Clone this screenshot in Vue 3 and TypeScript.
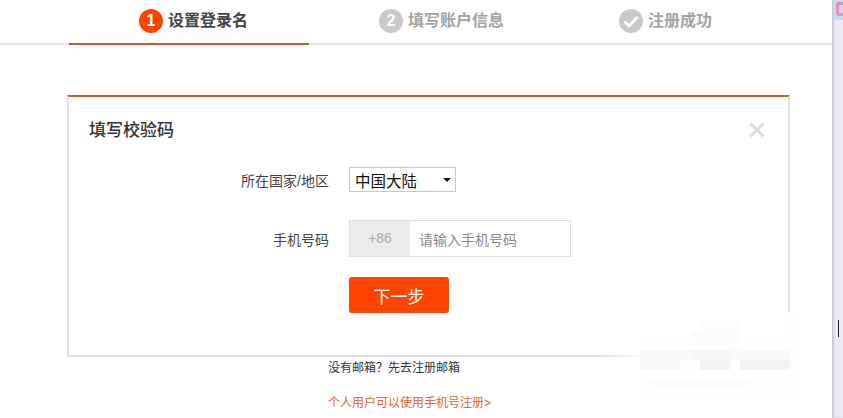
<script setup lang="ts">
interface Step { label: string; mark: string; active: boolean }
const steps: Step[] = [
  { label: '设置登录名', mark: '1', active: true },
  { label: '填写账户信息', mark: '2', active: false },
  { label: '注册成功', mark: 'check', active: false },
]
const mosaic: [number, number, number, number, string][] = [
  [640, 335, 160, 65, '#fefefe'],
  [782, 312, 18, 30, '#fefefe'],
  [700, 320, 40, 20, '#fdfdfd'],
  [690, 330, 50, 10, '#fbfbfb'],
  [690, 340, 50, 10, '#fcfcfc'],
  [640, 350, 150, 10, '#f9f9f9'],
  [690, 350, 40, 10, '#f6f6f6'],
  [640, 360, 40, 10, '#f8f8f8'],
  [700, 360, 30, 10, '#f4f4f4'],
  [740, 360, 50, 10, '#f4f4f4'],
  [650, 380, 100, 10, '#fbfbfb'],
  [600, 354, 40, 3, 'linear-gradient(90deg, rgba(253,253,253,0), #f9f9f9)'],
]
function cell(c: [number, number, number, number, string]) {
  return { left: c[0] + 'px', top: c[1] + 'px', width: c[2] + 'px', height: c[3] + 'px', background: c[4] }
}
</script>

<template>
  <div class="page">
    <main class="main">
      <nav class="steps">
        <div v-for="s in steps" :key="s.label" class="step" :class="{ active: s.active }">
          <span class="mark">
            <svg v-if="s.mark === 'check'" width="16" height="13" viewBox="0 0 16 13">
              <path d="M1.5 6.5 6 11 14.5 2" fill="none" stroke="#fff" stroke-width="2.8" />
            </svg>
            <template v-else>{{ s.mark }}</template>
          </span>
          <span class="label">{{ s.label }}</span>
        </div>
      </nav>

      <section class="card">
        <h2 class="title">填写校验码</h2>
        <svg class="close" width="16" height="16" viewBox="0 0 16 16">
          <path d="M1.5 1.5 14.5 14.5M14.5 1.5 1.5 14.5" stroke="#dcdcdc" stroke-width="3" />
        </svg>
        <div class="row first">
          <span class="field-label">所在国家/地区</span>
          <div class="select">
            <span>中国大陆</span>
            <i class="caret"></i>
          </div>
        </div>
        <div class="row second">
          <span class="field-label">手机号码</span>
          <div class="phone">
            <span class="code">+86</span>
            <span class="placeholder">请输入手机号码</span>
          </div>
        </div>
        <button class="next" type="button">下一步</button>
      </section>

      <p class="link">没有邮箱？先去注册邮箱</p>
      <p class="link orange">个人用户可以使用手机号注册&gt;</p>
    </main>
    <aside class="side">
      <span class="favicon"></span>
      <i class="tick"></i>
    </aside>
    <div v-for="(c, i) in mosaic" :key="i" class="blur" :style="cell(c)"></div>
  </div>
</template>

<style scoped>
.page {
  display: flex;
  width: 843px;
  height: 418px;
  overflow: hidden;
  background: #fff;
  font-family: "Liberation Sans", "Noto Sans CJK SC", sans-serif;
  color: #333;
}
.main {
  width: 832px;
  flex: none;
}
.steps {
  display: flex;
  height: 43px;
  padding-left: 69px;
  border-bottom: 2px solid #e6e6e6;
}
.step {
  width: 240px;
  height: 45px;
  display: flex;
  gap: 5px;
  padding: 9px 0 0 70px;
  box-sizing: border-box;
  font-size: 16px;
  font-weight: 700;
  color: #a3a3a3;
}
.step.active {
  color: #444;
  border-bottom: 2px solid #d4582a;
}
.mark {
  width: 24px;
  height: 24px;
  border-radius: 50%;
  background: #c9c9c9;
  color: #fff;
  font-size: 16px;
  line-height: 24px;
  display: flex;
  align-items: center;
  justify-content: center;
}
.active .mark { background: #ff4400; }
.label { line-height: 23px; }
.card {
  position: relative;
  margin: 50px 0 0 67px;
  width: 723px;
  height: 262px;
  box-sizing: border-box;
  border: 2px solid #e0e0e0;
  border-top: 2px solid #d4582a;
  padding: 23px 0 0 20px;
}
.title {
  margin: 0;
  font-size: 17px;
  line-height: 22px;
  font-weight: 500;
  color: #333;
}
.close {
  position: absolute;
  top: 25px;
  right: 23px;
}
.row {
  display: flex;
  align-items: center;
  margin-left: -20px;
}
.first { margin-top: 25px; }
.second { margin-top: 28px; }
.field-label {
  width: 260px;
  text-align: right;
  font-size: 14px;
  color: #444;
  margin-right: 20px;
}
.select {
  width: 107px;
  height: 25px;
  box-sizing: border-box;
  border: 1px solid #c8c8c8;
  display: flex;
  align-items: center;
  justify-content: space-between;
  padding: 0 4px 0 5px;
  font-size: 15.5px;
  color: #111;
}
.caret {
  width: 0;
  height: 0;
  border-left: 4px solid transparent;
  border-right: 4px solid transparent;
  border-top: 4px solid #111;
}
.phone {
  width: 222px;
  height: 37px;
  box-sizing: border-box;
  border: 1px solid #dedede;
  display: flex;
  align-items: center;
  font-size: 14px;
}
.code {
  width: 60px;
  height: 100%;
  background: #ececec;
  color: #a8a8a8;
  text-align: center;
  line-height: 35px;
}
.placeholder {
  margin-left: 9px;
  color: #8a8a8a;
}
.next {
  display: block;
  margin: 20px 0 0 260px;
  width: 100px;
  height: 36px;
  border: 0;
  border-radius: 3px;
  background: #ff4400;
  color: #fff;
  font: 17px "Liberation Sans", "Noto Sans CJK SC", sans-serif;
  padding: 0;
}
.link {
  margin: 3px 0 0 328px;
  font-size: 12px;
  line-height: 16px;
  color: #333;
}
.link.orange {
  margin-top: 19px;
  color: #e8622f;
}
.side {
  flex: 1;
  position: relative;
  background: #ecebf6;
  box-shadow: inset 2px 0 2px #c9c9d0;
}
.favicon {
  position: absolute;
  top: 0;
  left: 2px;
  width: 9px;
  height: 20px;
  background: #c5dcf0;
}
.favicon::after {
  content: "";
  position: absolute;
  left: 2px;
  top: 2px;
  width: 5px;
  height: 8px;
  border: 3px solid #e58fc0;
  border-radius: 3px;
}
.tick {
  position: absolute;
  left: 6px;
  top: 320px;
  width: 1px;
  height: 17px;
  background: #222;
}
.blur {
  position: absolute;
}
</style>

<style>
html, body { margin: 0; background: #fff; }
</style>
